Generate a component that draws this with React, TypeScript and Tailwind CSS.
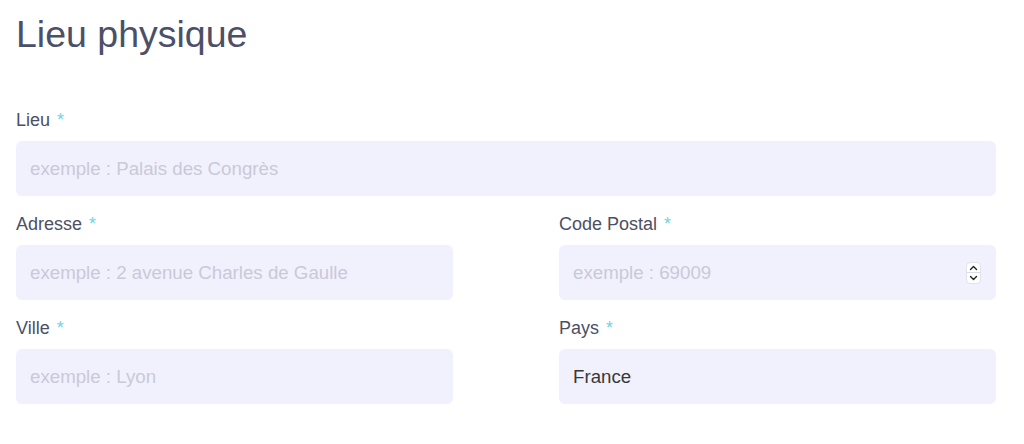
import React from 'react'

const font = { fontFamily: '"Liberation Sans", Arial, Helvetica, sans-serif' }

function Label({ children }: { children: React.ReactNode }) {
  return (
    <label className="block text-[18px] leading-[24px] text-[#4b5066] mb-[9px]">
      {children} <span className="ml-[2px] text-[#6dd5e3]">*</span>
    </label>
  )
}

function Field({
  label,
  placeholder,
  value,
  spinner,
}: {
  label: string
  placeholder?: string
  value?: string
  spinner?: boolean
}) {
  return (
    <div>
      <Label>{label}</Label>
      <div className="relative">
        <input
          type="text"
          readOnly
          defaultValue={value}
          placeholder={placeholder}
          className="w-full h-[55px] rounded-md bg-[#f1f1fd] px-[14px] text-[18.7px] text-[#383838] placeholder:text-[#c9c9d8] outline-none"
          style={font}
        />
        {spinner && (
          <div className="absolute right-[15px] top-1/2 -translate-y-1/2 w-[15px] h-[22px] rounded-[4px] bg-white border border-[#e2e2e8] flex flex-col items-center justify-between py-[2px]">
            <svg width="9" height="6" viewBox="0 0 9 6" fill="none">
              <path d="M1.5 4.5L4.5 1.5L7.5 4.5" stroke="#222" strokeWidth="1.4" strokeLinecap="round" strokeLinejoin="round" />
            </svg>
            <div className="w-full h-px bg-[#dcdce2]" />
            <svg width="9" height="6" viewBox="0 0 9 6" fill="none">
              <path d="M1.5 1.5L4.5 4.5L7.5 1.5" stroke="#222" strokeWidth="1.4" strokeLinecap="round" strokeLinejoin="round" />
            </svg>
          </div>
        )}
      </div>
    </div>
  )
}

export default function App() {
  return (
    <div className="min-h-screen bg-white px-4 pt-[13px]" style={font}>
      <h1 className="text-[37.5px] leading-[43px] text-[#4b5068] mb-[52px]">Lieu physique</h1>

      <div className="w-[980px] flex flex-col gap-4">
        <Field label="Lieu" placeholder="exemple : Palais des Congrès" />
        <div className="grid grid-cols-2 gap-x-[106px] gap-y-4">
          <Field label="Adresse" placeholder="exemple : 2 avenue Charles de Gaulle" />
          <Field label="Code Postal" placeholder="exemple : 69009" spinner />
          <Field label="Ville" placeholder="exemple : Lyon" />
          <Field label="Pays" value="France" />
        </div>
      </div>
    </div>
  )
}
